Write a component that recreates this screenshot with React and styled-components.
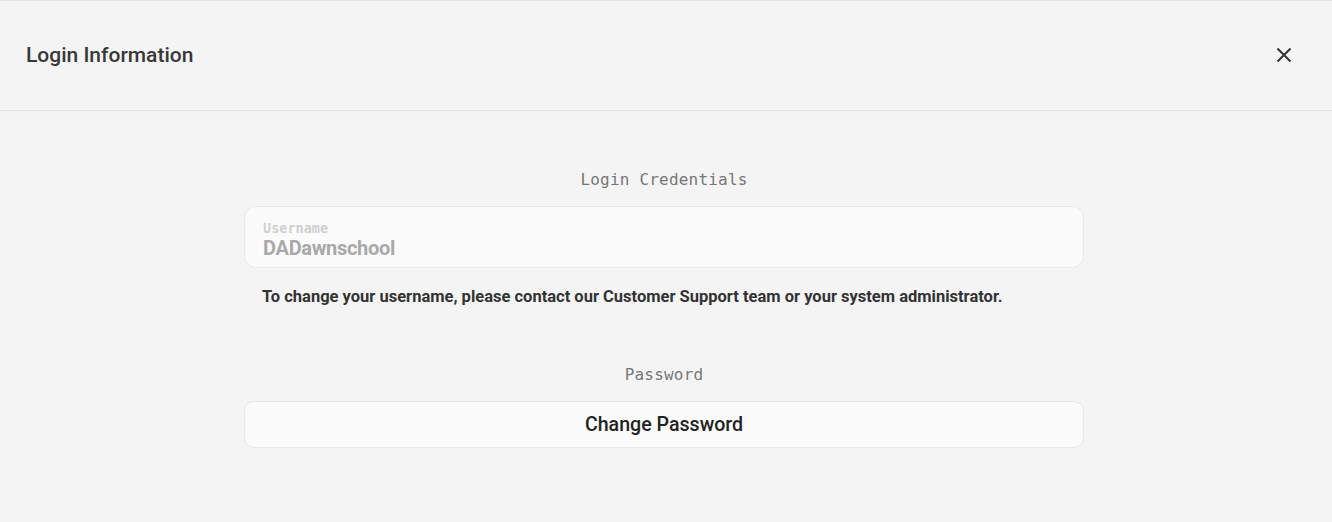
import styled, { createGlobalStyle } from 'styled-components';

const GlobalStyle = createGlobalStyle`
  html, body {
    margin: 0;
    padding: 0;
    background: #f4f4f4;
    font-family: Roboto, "Noto Sans", sans-serif;
  }
`;

const Panel = styled.div`
  width: 1332px;
  height: 522px;
  box-sizing: border-box;
  border-top: 1px solid #e2e2e2;
  background: #f4f4f4;
  display: flex;
  flex-direction: column;
`;

const Header = styled.header`
  height: 110px;
  box-sizing: border-box;
  border-bottom: 1px solid #e4e4e4;
  display: flex;
  align-items: center;
  justify-content: space-between;
  padding: 0 36px 2px 26px;
`;

const Title = styled.h1`
  margin: 0;
  font-family: Roboto, sans-serif;
  font-weight: 500;
  font-size: 21px;
  color: #383838;
`;

const CloseButton = styled.button`
  border: none;
  background: none;
  padding: 0;
  width: 24px;
  height: 24px;
  display: flex;
  align-items: center;
  justify-content: center;
  color: #333;
  cursor: pointer;
`;

const Body = styled.main`
  display: flex;
  flex-direction: column;
  align-items: center;
  padding: 59px 4px 0 0;
`;

const Section = styled.section`
  width: 840px;
  display: flex;
  flex-direction: column;
  margin-bottom: ${p => p.$gap || 0}px;
`;

const SectionLabel = styled.h2`
  margin: 0 0 17px;
  text-align: center;
  font-family: "DejaVu Sans Mono", monospace;
  font-weight: 400;
  font-size: 16px;
  color: #777;
  letter-spacing: 0.2px;
`;

const Field = styled.div`
  height: 62px;
  box-sizing: border-box;
  border: 1px solid #e8e8e8;
  border-radius: 12px;
  background: #fbfbfb;
  padding: 14px 18px 0;
  display: flex;
  flex-direction: column;
`;

const FieldLabel = styled.span`
  font-family: "DejaVu Sans Mono", monospace;
  font-size: 13.5px;
  font-weight: 700;
  line-height: 15px;
  color: #cfcfcf;
`;

const FieldValue = styled.span`
  font-size: 20px;
  font-weight: 700;
  line-height: 24px;
  color: #a9a9a9;
  letter-spacing: -0.3px;
`;

const Help = styled.p`
  margin: 19px 0 0 18px;
  font-size: 16.5px;
  font-weight: 700;
  color: #333;
`;

const ActionButton = styled.button`
  height: 47px;
  width: 100%;
  border: 1px solid #e8e8e8;
  border-radius: 10px;
  background: #fbfbfb;
  font-family: Roboto, sans-serif;
  font-size: 19.6px;
  font-weight: 500;
  color: #222;
  cursor: pointer;
`;

export default function App() {
  return (
    <>
      <GlobalStyle />
      <Panel>
        <Header>
          <Title>Login Information</Title>
          <CloseButton aria-label="Close">
            <svg width="16" height="16" viewBox="0 0 16 16" fill="none" stroke="currentColor" strokeWidth="2">
              <path d="M1.5 1.5 14.5 14.5M14.5 1.5 1.5 14.5" />
            </svg>
          </CloseButton>
        </Header>
        <Body>
          <Section $gap={59}>
            <SectionLabel>Login Credentials</SectionLabel>
            <Field>
              <FieldLabel>Username</FieldLabel>
              <FieldValue>DADawnschool</FieldValue>
            </Field>
            <Help>
              To change your username, please contact our Customer Support team or your system administrator.
            </Help>
          </Section>
          <Section>
            <SectionLabel>Password</SectionLabel>
            <ActionButton>Change Password</ActionButton>
          </Section>
        </Body>
      </Panel>
    </>
  );
}
